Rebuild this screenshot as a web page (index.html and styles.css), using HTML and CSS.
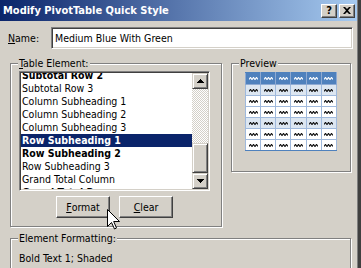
FILE: index.html
```html
<!DOCTYPE html>
<html>
<head>
<meta charset="utf-8">
<link rel="stylesheet" href="styles.css">
</head>
<body>
<svg class="defs" width="0" height="0">
  <symbol id="zz" viewBox="0 0 9 3"><path d="M0 2.5L1.5 0.5L3 2.5L4.5 0.5L6 2.5L7.5 0.5L9 2.5" fill="none" stroke="currentColor" stroke-width="1.2"/></symbol>
</svg>
<div class="window">
  <div class="titlebar">
    <span class="title">Modify PivotTable Quick Style</span>
    <div class="caption-btns">
      <span class="cbtn">?</span>
      <span class="cbtn"><svg width="8" height="7" viewBox="0 0 8 7"><path d="M0 0h2l2 2 2-2h2L5 3.5 8 7H6L4 5 2 7H0l3-3.5z"/></svg></span>
    </div>
  </div>

  <div class="name-row">
    <span class="name-label"><u>N</u>ame:</span>
    <div class="textbox">Medium Blue With Green</div>
  </div>

  <div class="main-row">
    <div class="group table-group">
      <div class="group-title"><u>T</u>able Element:</div>
      <div class="listbox">
        <div class="list-items">
          <div class="list-inner">
            <div class="item b">Subtotal Row 2</div>
            <div class="item">Subtotal Row 3</div>
            <div class="item">Column Subheading 1</div>
            <div class="item">Column Subheading 2</div>
            <div class="item">Column Subheading 3</div>
            <div class="item b sel">Row Subheading 1</div>
            <div class="item b">Row Subheading 2</div>
            <div class="item">Row Subheading 3</div>
            <div class="item">Grand Total Column</div>
            <div class="item b">Grand Total Row</div>
          </div>
        </div>
        <div class="scrollbar">
          <div class="sb-btn"><svg width="7" height="4" viewBox="0 0 7 4"><path d="M3 0h1v1h1v1h1v1h1v1H0V3h1V2h1V1h1z"/></svg></div>
          <div class="sb-track"><div class="sb-thumb"></div></div>
          <div class="sb-btn"><svg width="7" height="4" viewBox="0 0 7 4"><path d="M0 0h7v1H6v1H5v1H4v1H3V3H2V2H1V1H0z"/></svg></div>
        </div>
      </div>
      <div class="btn-row">
        <div class="btn"><u>F</u>ormat</div>
        <div class="btn"><u>C</u>lear</div>
      </div>
    </div>

    <div class="group preview-group">
      <div class="group-title">Preview</div>
      <table class="pv">
        <tr class="hd"><td><svg><use href="#zz"/></svg></td><td><svg><use href="#zz"/></svg></td><td><svg><use href="#zz"/></svg></td><td><svg><use href="#zz"/></svg></td><td><svg><use href="#zz"/></svg></td><td><svg><use href="#zz"/></svg></td></tr>
        <tr class="band"><td><svg><use href="#zz"/></svg></td><td><svg><use href="#zz"/></svg></td><td><svg><use href="#zz"/></svg></td><td><svg><use href="#zz"/></svg></td><td><svg><use href="#zz"/></svg></td><td><svg><use href="#zz"/></svg></td></tr>
        <tr><td><svg><use href="#zz"/></svg></td><td><svg><use href="#zz"/></svg></td><td><svg><use href="#zz"/></svg></td><td><svg><use href="#zz"/></svg></td><td><svg><use href="#zz"/></svg></td><td><svg><use href="#zz"/></svg></td></tr>
        <tr><td><svg><use href="#zz"/></svg></td><td><svg><use href="#zz"/></svg></td><td><svg><use href="#zz"/></svg></td><td><svg><use href="#zz"/></svg></td><td><svg><use href="#zz"/></svg></td><td><svg><use href="#zz"/></svg></td></tr>
        <tr class="band"><td><svg><use href="#zz"/></svg></td><td><svg><use href="#zz"/></svg></td><td><svg><use href="#zz"/></svg></td><td><svg><use href="#zz"/></svg></td><td><svg><use href="#zz"/></svg></td><td><svg><use href="#zz"/></svg></td></tr>
        <tr><td><svg><use href="#zz"/></svg></td><td><svg><use href="#zz"/></svg></td><td><svg><use href="#zz"/></svg></td><td><svg><use href="#zz"/></svg></td><td><svg><use href="#zz"/></svg></td><td><svg><use href="#zz"/></svg></td></tr>
        <tr class="last"><td><svg><use href="#zz"/></svg></td><td><svg><use href="#zz"/></svg></td><td><svg><use href="#zz"/></svg></td><td><svg><use href="#zz"/></svg></td><td><svg><use href="#zz"/></svg></td><td><svg><use href="#zz"/></svg></td></tr>
      </table>
    </div>
  </div>

  <div class="group format-group">
    <div class="group-title">Element Formatting:</div>
    <div class="format-text">Bold Text 1; Shaded</div>
  </div>

  <svg class="cursor" width="13" height="21" viewBox="0 0 13 21"><path d="M0.5 0.5V17.5L4.5 13.5L7.5 20L9.5 19L6.7 12.5H12.5Z" fill="#fff" stroke="#000" stroke-width="1"/></svg>
</div>
</body>
</html>
```

FILE: styles.css
```css
* { box-sizing: border-box; }
html, body { margin: 0; padding: 0; }
body {
  width: 361px;
  height: 268px;
  overflow: hidden;
  background: #404040;
  font-family: "DejaVu Sans Condensed", "DejaVu Sans", sans-serif;
  font-size: 10.5px;
  color: #000;
}
.defs { position: absolute; width: 0; height: 0; overflow: hidden; }
u { text-decoration: underline; text-underline-offset: 1px; }

.window {
  position: relative;
  width: 358px;
  height: 268px;
  background: #d4d0c8;
  border-right: 1px solid #808080;
  display: flex;
  flex-direction: column;
  overflow: hidden;
}

.titlebar {
  height: 21px;
  flex: none;
  display: flex;
  align-items: center;
  padding: 0 2px 0 3px;
  background: linear-gradient(to right, #0a246a, #a6caf0);
}
.title { color: #fff; font-weight: bold; font-size: 11px; white-space: nowrap; }
.caption-btns { margin-left: auto; display: flex; gap: 2px; }
.cbtn {
  width: 16px;
  height: 14px;
  background: #d4d0c8;
  border: 1px solid;
  border-color: #fff #404040 #404040 #fff;
  box-shadow: inset -1px -1px #808080;
  display: flex;
  align-items: center;
  justify-content: center;
  font-weight: bold;
  font-size: 11px;
  line-height: 1;
}

.name-row {
  flex: none;
  display: flex;
  align-items: center;
  margin-top: 6px;
  padding-left: 8px;
}
.name-label { width: 43px; }
.textbox {
  width: 302px;
  height: 22px;
  background: #fff;
  border: 1px solid;
  border-color: #808080 #fff #fff #808080;
  box-shadow: inset 1px 1px #404040, inset -1px -1px #d4d0c8;
  padding-left: 3px;
  display: flex;
  align-items: center;
  font-size: 10.5px;
}

.main-row {
  flex: none;
  display: flex;
  align-items: flex-start;
  gap: 9px;
  margin-top: 14px;
  padding-left: 10px;
}

.group {
  flex: none;
  border: 1px solid #808080;
  box-shadow: 1px 1px 0 #fff, inset 1px 1px 0 #fff;
}
.group-title {
  width: max-content;
  height: 13px;
  line-height: 13px;
  margin: -7px 0 0 7px;
  padding: 0 1px;
  background: #d4d0c8;
  white-space: nowrap;
}

.table-group { width: 212px; height: 164px; }

.listbox {
  width: 191px;
  height: 120px;
  margin: 1px 0 0 8px;
  display: flex;
  background: #fff;
  border: 1px solid;
  border-color: #808080 #fff #fff #808080;
  box-shadow: inset 1px 1px #404040, inset -1px -1px #d4d0c8;
  padding: 1px;
}
.list-items { flex: 1; overflow: hidden; }
.list-inner { margin-top: -4px; }
.item {
  height: 13px;
  line-height: 13px;
  padding-left: 1px;
  white-space: nowrap;
}
.item.b { font-weight: bold; }
.item.sel { background: #0a246a; color: #fff; }

.scrollbar { flex: none; width: 16px; display: flex; flex-direction: column; }
.sb-btn, .sb-thumb {
  flex: none;
  width: 16px;
  background: #d4d0c8;
  border: 1px solid;
  border-color: #d4d0c8 #404040 #404040 #d4d0c8;
  box-shadow: inset 1px 1px #fff, inset -1px -1px #808080;
}
.sb-btn { height: 16px; display: flex; align-items: center; justify-content: center; }
.sb-track {
  flex: 1;
  display: flex;
  flex-direction: column;
  justify-content: flex-end;
  background: repeating-conic-gradient(#d4d0c8 0 25%, #fff 0 50%) 0 0 / 2px 2px;
}
.sb-thumb { height: 30px; }

.btn-row {
  display: flex;
  justify-content: center;
  gap: 9px;
  width: 191px;
  margin: 5px 0 0 8px;
}
.btn {
  width: 54px;
  height: 22px;
  background: #d4d0c8;
  border: 1px solid;
  border-color: #fff #404040 #404040 #fff;
  box-shadow: inset -1px -1px #808080;
  display: flex;
  align-items: center;
  justify-content: center;
}

.preview-group { width: 120px; height: 109px; }
.pv {
  border-collapse: collapse;
  table-layout: fixed;
  width: 92px;
  margin: 2px 0 0 13px;
}
.pv td {
  padding: 0;
  height: 11px;
  border: 1px solid #9fb9dc;
  background: #fff;
  color: #111;
}
.pv tr.hd td { height: 12px; background: #4f81bd; color: #fff; border-color: #8eaad3; border-top-color: #4f81bd; }
.pv tr.band td { background: #dce6f1; }
.pv tr.last td { border-bottom-color: #4f81bd; }
.pv svg { display: block; width: 9px; height: 3px; margin: 0 auto; }

.format-group {
  width: 341px;
  height: 40px;
  margin: 11px 0 0 10px;
}
.format-text { margin: 7px 0 0 8px; line-height: 13px; }

.cursor { position: absolute; left: 107px; top: 209px; }
```
